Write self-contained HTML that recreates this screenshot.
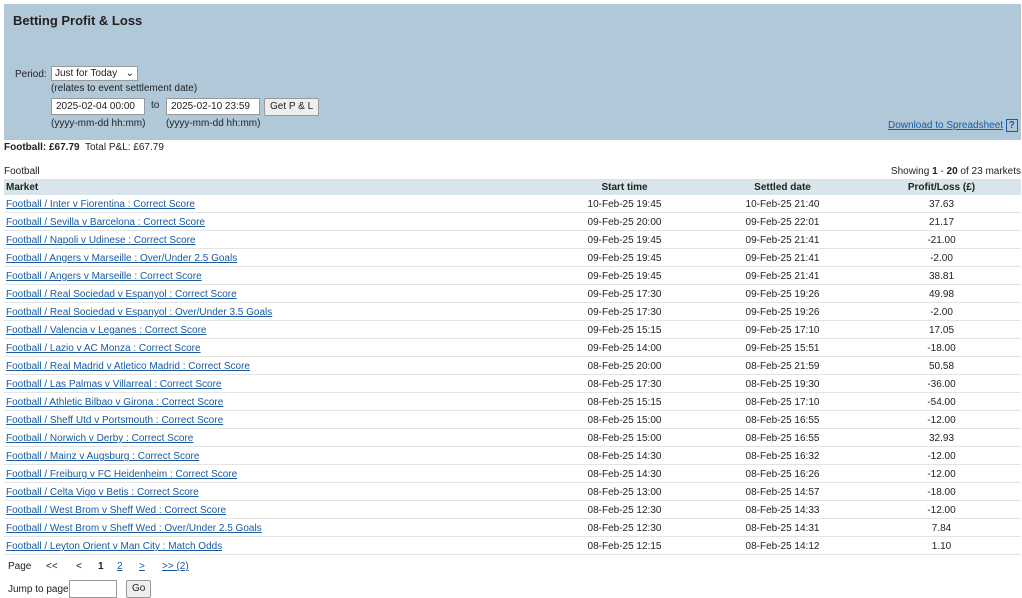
<!DOCTYPE html>
<html><head><meta charset="utf-8"><style>
body{margin:0;font-family:"Liberation Sans",sans-serif;font-size:10px;color:#222;background:#fff;width:1022px;height:594px;overflow:hidden;position:relative}
.panel{position:absolute;left:4px;top:4px;width:1017px;height:136px;background:#b1c8d8}
.abs{position:absolute;white-space:nowrap}
.inp{position:absolute;background:#fff;border:1px solid #999;height:17px;box-sizing:border-box;padding:2px 4px;font-size:10px;white-space:nowrap}
.btn{position:absolute;background:#eee;border:1px solid #999;height:18px;box-sizing:border-box;padding:2px 5px;font-size:10px;border-radius:2px;white-space:nowrap}
a{color:#1a5aa0;text-decoration:underline}
table{position:absolute;left:4px;top:179px;width:1017px;border-collapse:collapse}
th{background:#d8e6eb;height:16px;font-weight:bold;padding:0 2px;text-align:center}
th:first-child{text-align:left}
td{height:15px;border-bottom:1px solid #e4e4e4;padding:2px 2px 0;text-align:center;white-space:nowrap;vertical-align:middle}
td:first-child{text-align:left}
</style></head><body>
<div class="panel">
<div class="abs" style="left:9px;top:9px;font-size:13px;font-weight:bold">Betting Profit &amp; Loss</div>
<div class="abs" style="left:11px;top:65px">Period:</div>
<div class="inp" style="left:47px;top:62px;width:87px;height:15px;padding:1px 3px">Just for Today <span style="float:right">&#8964;</span></div>
<div class="abs" style="left:47px;top:79px">(relates to event settlement date)</div>
<div class="inp" style="left:47px;top:94px;width:94px">2025-02-04 00:00</div>
<div class="abs" style="left:147px;top:96px">to</div>
<div class="inp" style="left:162px;top:94px;width:94px">2025-02-10 23:59</div>
<div class="btn" style="left:260px;top:94px">Get P &amp; L</div>
<div class="abs" style="left:47px;top:114px">(yyyy-mm-dd hh:mm)</div>
<div class="abs" style="left:162px;top:114px">(yyyy-mm-dd hh:mm)</div>
<div class="abs" style="left:884px;top:115px"><a>Download to Spreadsheet</a> <span style="display:inline-block;border:1px solid #1a5aa0;color:#1a5aa0;font-weight:bold;width:10px;height:11px;line-height:11px;text-align:center">?</span></div>
</div>
<div class="abs" style="left:4px;top:142px"><b>Football: £67.79</b>&nbsp; Total P&amp;L: £67.79</div>
<div class="abs" style="left:4px;top:166px">Football</div>
<div class="abs" style="right:1px;top:166px">Showing <b>1</b> - <b>20</b> of 23 markets</div>
<table>
<tr><th style="width:538px">Market</th><th style="width:153px">Start time</th><th style="width:155px">Settled date</th><th>Profit/Loss (£)</th></tr>
<tr><td><a>Football / Inter v Fiorentina : Correct Score</a></td><td>10-Feb-25 19:45</td><td>10-Feb-25 21:40</td><td>37.63</td></tr>
<tr><td><a>Football / Sevilla v Barcelona : Correct Score</a></td><td>09-Feb-25 20:00</td><td>09-Feb-25 22:01</td><td>21.17</td></tr>
<tr><td><a>Football / Napoli v Udinese : Correct Score</a></td><td>09-Feb-25 19:45</td><td>09-Feb-25 21:41</td><td>-21.00</td></tr>
<tr><td><a>Football / Angers v Marseille : Over/Under 2.5 Goals</a></td><td>09-Feb-25 19:45</td><td>09-Feb-25 21:41</td><td>-2.00</td></tr>
<tr><td><a>Football / Angers v Marseille : Correct Score</a></td><td>09-Feb-25 19:45</td><td>09-Feb-25 21:41</td><td>38.81</td></tr>
<tr><td><a>Football / Real Sociedad v Espanyol : Correct Score</a></td><td>09-Feb-25 17:30</td><td>09-Feb-25 19:26</td><td>49.98</td></tr>
<tr><td><a>Football / Real Sociedad v Espanyol : Over/Under 3.5 Goals</a></td><td>09-Feb-25 17:30</td><td>09-Feb-25 19:26</td><td>-2.00</td></tr>
<tr><td><a>Football / Valencia v Leganes : Correct Score</a></td><td>09-Feb-25 15:15</td><td>09-Feb-25 17:10</td><td>17.05</td></tr>
<tr><td><a>Football / Lazio v AC Monza : Correct Score</a></td><td>09-Feb-25 14:00</td><td>09-Feb-25 15:51</td><td>-18.00</td></tr>
<tr><td><a>Football / Real Madrid v Atletico Madrid : Correct Score</a></td><td>08-Feb-25 20:00</td><td>08-Feb-25 21:59</td><td>50.58</td></tr>
<tr><td><a>Football / Las Palmas v Villarreal : Correct Score</a></td><td>08-Feb-25 17:30</td><td>08-Feb-25 19:30</td><td>-36.00</td></tr>
<tr><td><a>Football / Athletic Bilbao v Girona : Correct Score</a></td><td>08-Feb-25 15:15</td><td>08-Feb-25 17:10</td><td>-54.00</td></tr>
<tr><td><a>Football / Sheff Utd v Portsmouth : Correct Score</a></td><td>08-Feb-25 15:00</td><td>08-Feb-25 16:55</td><td>-12.00</td></tr>
<tr><td><a>Football / Norwich v Derby : Correct Score</a></td><td>08-Feb-25 15:00</td><td>08-Feb-25 16:55</td><td>32.93</td></tr>
<tr><td><a>Football / Mainz v Augsburg : Correct Score</a></td><td>08-Feb-25 14:30</td><td>08-Feb-25 16:32</td><td>-12.00</td></tr>
<tr><td><a>Football / Freiburg v FC Heidenheim : Correct Score</a></td><td>08-Feb-25 14:30</td><td>08-Feb-25 16:26</td><td>-12.00</td></tr>
<tr><td><a>Football / Celta Vigo v Betis : Correct Score</a></td><td>08-Feb-25 13:00</td><td>08-Feb-25 14:57</td><td>-18.00</td></tr>
<tr><td><a>Football / West Brom v Sheff Wed : Correct Score</a></td><td>08-Feb-25 12:30</td><td>08-Feb-25 14:33</td><td>-12.00</td></tr>
<tr><td><a>Football / West Brom v Sheff Wed : Over/Under 2.5 Goals</a></td><td>08-Feb-25 12:30</td><td>08-Feb-25 14:31</td><td>7.84</td></tr>
<tr><td><a>Football / Leyton Orient v Man City : Match Odds</a></td><td>08-Feb-25 12:15</td><td>08-Feb-25 14:12</td><td>1.10</td></tr>
</table>
<div class="abs" style="left:8px;top:561px">Page</div>
<div class="abs" style="left:46px;top:561px">&lt;&lt;</div>
<div class="abs" style="left:76px;top:561px">&lt;</div>
<div class="abs" style="left:98px;top:561px;font-weight:bold">1</div>
<div class="abs" style="left:117px;top:561px"><a>2</a></div>
<div class="abs" style="left:139px;top:561px"><a>&gt;</a></div>
<div class="abs" style="left:162px;top:561px"><a>&gt;&gt; (2)</a></div>
<div class="abs" style="left:8px;top:584px">Jump to page</div>
<div class="inp" style="left:69px;top:580px;width:48px;height:18px"></div>
<div class="btn" style="left:126px;top:580px">Go</div>
</body></html>
